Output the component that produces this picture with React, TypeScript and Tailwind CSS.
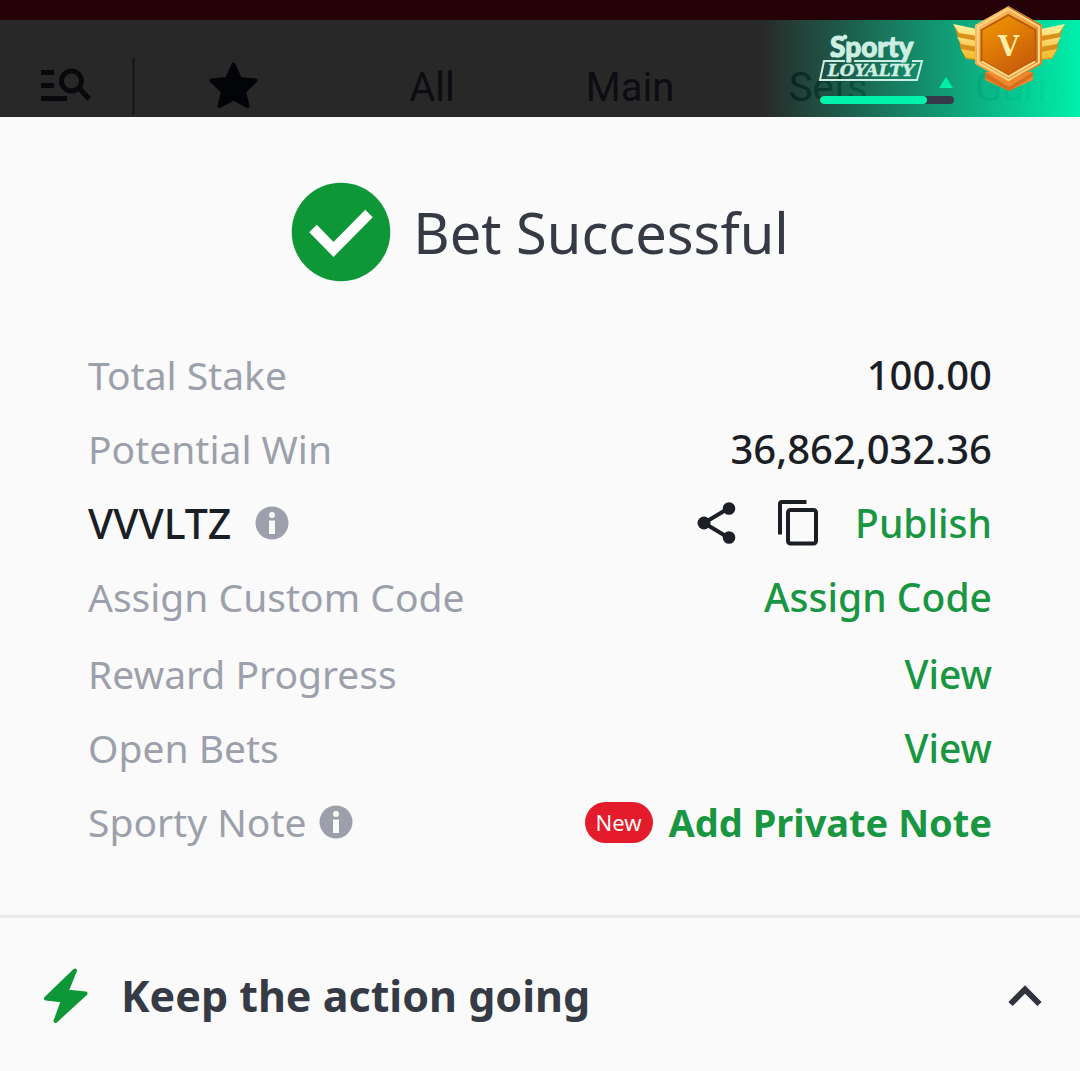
import type { ReactNode } from 'react';

const tabs = ['All', 'Main', 'Sets'];

function ListSearchIcon() {
  return (
    <svg width="52" height="36" viewBox="0 0 52 36" aria-hidden="true">
      <path d="M1 2h13v5H1zM1 15h13v5H1zM1 28h26v5H1z" fill="#07090c" />
      <circle cx="31.500" cy="13" r="10" fill="none" stroke="#07090c" strokeWidth="5" />
      <path d="M39 20 49 31" stroke="#07090c" strokeWidth="5" />
    </svg>
  );
}

function StarIcon() {
  return (
    <svg width="50" height="48" viewBox="0 0 50 48" aria-hidden="true">
      <path
        d="M24.500 2.500 31 17 46.500 18.500 35 29.500 38.500 44 24.500 36.500 10.500 44 14 29.500 2.500 18.500 18 17Z"
        fill="#020407"
        stroke="#020407"
        strokeWidth="4"
        strokeLinejoin="round"
      />
    </svg>
  );
}

function InfoIcon() {
  return (
    <svg width="34" height="34" viewBox="0 0 34 34" aria-hidden="true">
      <circle cx="17" cy="17" r="16.500" fill="#9ca0ab" />
      <circle cx="17" cy="9" r="3" fill="#fafafa" />
      <path d="M14 14.500h6V28h-6z" fill="#fafafa" />
    </svg>
  );
}

function ShareIcon() {
  return (
    <svg width="40" height="44" viewBox="0 0 40 44" aria-hidden="true">
      <path d="M32 7 7 22 32 37" fill="none" stroke="#1b1e25" strokeWidth="4" />
      <circle cx="32" cy="7.500" r="6.300" fill="#1b1e25" />
      <circle cx="7" cy="22" r="6.500" fill="#1b1e25" />
      <circle cx="32" cy="36.500" r="6.300" fill="#1b1e25" />
    </svg>
  );
}

function CopyIcon() {
  return (
    <svg width="42" height="48" viewBox="0 0 42 48" aria-hidden="true">
      <path d="M3 35.500V5a2 2 0 0 1 2-2h24.500" fill="none" stroke="#1b1e25" strokeWidth="4" />
      <rect x="11" y="11" width="28" height="33.500" rx="2.500" fill="none" stroke="#1b1e25" strokeWidth="4" />
    </svg>
  );
}

function SuccessIcon() {
  return (
    <svg width="100" height="100" viewBox="0 0 100 100" className="shrink-0" aria-hidden="true">
      <circle cx="50" cy="50" r="49.300" fill="#0d9737" />
      <path d="M22 46.500 42.500 67.500 78 31.500" fill="none" stroke="#fff" strokeWidth="10.500" />
    </svg>
  );
}

function BoltIcon() {
  return (
    <svg width="46" height="58" viewBox="0 0 46 58" aria-hidden="true">
      <path
        d="M32 3.500 23.500 24.500 42.500 26.500 12.500 54 20 33.500 3 31.500Z"
        fill="#0d9737"
        stroke="#0d9737"
        strokeWidth="4"
        strokeLinejoin="round"
      />
    </svg>
  );
}

function MedalIcon() {
  return (
    <svg width="112" height="88" viewBox="0 0 112 88" role="img" aria-label="Loyalty level V">
      <defs>
        <linearGradient id="wing" x1="0" y1="0" x2="0" y2="1">
          <stop offset="0" stopColor="#fff3a0" />
          <stop offset="1" stopColor="#f5b92c" />
        </linearGradient>
        <linearGradient id="rim" x1="0" y1="0" x2="1" y2="1">
          <stop offset="0" stopColor="#ffc870" />
          <stop offset="0.5" stopColor="#f5a03c" />
          <stop offset="1" stopColor="#d97410" />
        </linearGradient>
        <linearGradient id="face" x1="0" y1="0" x2="0.600" y2="1">
          <stop offset="0" stopColor="#f39a00" />
          <stop offset="1" stopColor="#c95c0c" />
        </linearGradient>
      </defs>
      <path d="M1 19 24 24V54L13 53 8 44 6 34Z" fill="#d99018" />
      <path d="M111 19 88 24V54L99 53 104 44 106 34Z" fill="#d99018" />
      <path d="M0 18 24 23V30L6 27ZM4 31 24 35V41L8 38ZM8 43 24 46V53L13 52Z" fill="url(#wing)" />
      <path d="M112 18 88 23V30L106 27ZM108 31 88 35V41L104 38ZM104 43 88 46V53L99 52Z" fill="url(#wing)" />
      <path d="M32 66 80 66V74L56 85 32 74Z" fill="#f0872e" />
      <path d="M32 66 56 81 80 66 80 70 56 85 32 72Z" fill="#b9560d" opacity="0.5" />
      <path d="M55.500 0 89 19V58L55.500 77 22 58V19Z" fill="url(#rim)" />
      <path d="M55.500 1 88 19.500" stroke="#b9691a" strokeWidth="1" />
      <path d="M55.500 3 86 20.500V56.500L55.500 74 25 56.500V20.500Z" fill="none" stroke="#ffd58c" strokeWidth="2" />
      <path d="M55.500 9 82.500 24V54L55.500 69.500 28.500 54V24Z" fill="url(#face)" stroke="#b85c0c" strokeWidth="2" />
      <path d="M29 55.500 55.500 70.500 82 55.500" fill="none" stroke="#ffe08a" strokeWidth="2" />
      <text x="55.500" y="49.500" textAnchor="middle" fontFamily="DejaVu Serif, serif" fontWeight="700" fontSize="27" fill="#ffefa6">
        V
      </text>
    </svg>
  );
}

function LoyaltyLogo() {
  return (
    <svg width="110" height="52" viewBox="0 0 110 52" role="img" aria-label="Sporty Loyalty">
      <g fill="#cdeee2" stroke="#cdeee2">
        <text x="11" y="25" fontFamily="Lato, sans-serif" fontWeight="900" fontSize="28" strokeWidth="1">
          Sporty
        </text>
        <circle cx="26" cy="5" r="2" />
        <circle cx="14" cy="23" r="2" />
        <text x="52" y="44" textAnchor="middle" fontFamily="DejaVu Serif, serif" fontWeight="700" fontStyle="italic" fontSize="17" strokeWidth="0.500">
          LOYALTY
        </text>
      </g>
      <path d="M35 29H84M93 29H103L98 48H1L5 29H26" fill="none" stroke="#cdeee2" strokeWidth="2" />
    </svg>
  );
}

function LoyaltyBanner() {
  return (
    <aside className="absolute right-0 top-0 h-full w-[320px] bg-linear-to-r from-[#00f0ac]/0 to-[#00f0ac]">
      <div className="absolute left-[59px] top-[12px]">
        <LoyaltyLogo />
      </div>
      <svg width="14" height="11" viewBox="0 0 14 11" className="absolute left-[179px] top-[57px]" aria-hidden="true">
        <path d="M7 0 14 11H0Z" fill="#00eea6" />
      </svg>
      <div
        role="progressbar"
        aria-label="Loyalty progress"
        aria-valuenow={80}
        aria-valuemin={0}
        aria-valuemax={100}
        className="absolute left-[60px] top-[76px] h-2 w-[134px] overflow-hidden rounded-full bg-[#353a4a]"
      >
        <div className="h-full w-4/5 rounded-full bg-[#00f3ab]" />
      </div>
      <div className="absolute -top-[14px] right-[15px]">
        <MedalIcon />
      </div>
    </aside>
  );
}

function Row({ label, children, strong = false, info = false }: { label: string; children: ReactNode; strong?: boolean; info?: boolean }) {
  return (
    <div className="flex h-[74px] items-center justify-between">
      <dt className={strong ? 'flex items-center gap-6 text-[41px] font-medium text-[#1b1e25]' : 'flex items-center gap-3 text-[#9ca0ab]'}>
        {label}
        {info && (
          <button type="button" aria-label={`About ${label}`}>
            <InfoIcon />
          </button>
        )}
      </dt>
      <dd className="flex items-center font-medium text-[#1b1e25]">{children}</dd>
    </div>
  );
}

function Action({ children }: { children: ReactNode }) {
  return (
    <button type="button" className="font-medium text-[#189641]">
      {children}
    </button>
  );
}

export default function App() {
  return (
    <div className="min-h-screen overflow-hidden bg-[#fafafa] font-['Noto_Sans',sans-serif]">
      <header>
        <div className="h-5 bg-[#240207]" />
        <div className="relative h-[97px] bg-[#282828]">
          <nav className="flex h-full items-center overflow-hidden pt-[34px] font-['Roboto',sans-serif] text-[40px] text-[#0b0d10]">
            <button type="button" aria-label="Search leagues" className="flex w-[132px] shrink-0 justify-center">
              <ListSearchIcon />
            </button>
            <div className="h-[56px] w-[3px] shrink-0 bg-[#1a1a1a]" />
            <button type="button" aria-label="Favourites" className="flex w-[198px] shrink-0 justify-center">
              <StarIcon />
            </button>
            {tabs.map((tab) => (
              <button type="button" key={tab} className="w-[198px] shrink-0 pt-1 text-center">
                {tab}
              </button>
            ))}
            <button type="button" className="shrink-0 px-12 pt-1">
              Game
            </button>
          </nav>
          <LoyaltyBanner />
        </div>
      </header>

      <main>
        <h1 className="flex items-center justify-center gap-[22px] pt-[65px] text-[56px] leading-[100px] text-[#353a45]">
          <SuccessIcon />
          Bet Successful
        </h1>

        <dl className="flex flex-col gap-[3px] px-[88px] pb-14 pt-14 text-[39px] leading-[56px]">
          <div>
            <Row label="Total Stake">
              <span className="text-[40px]">100.00</span>
            </Row>
            <Row label="Potential Win">
              <span className="text-[40px]">36,862,032.36</span>
            </Row>
            <Row label="VVVLTZ" strong info>
              <button type="button" aria-label="Share" className="mr-10">
                <ShareIcon />
              </button>
              <button type="button" aria-label="Copy" className="mr-9">
                <CopyIcon />
              </button>
              <Action>Publish</Action>
            </Row>
            <Row label="Assign Custom Code">
              <Action>Assign Code</Action>
            </Row>
          </div>
          <div>
            <Row label="Reward Progress">
              <Action>View</Action>
            </Row>
            <Row label="Open Bets">
              <Action>View</Action>
            </Row>
            <Row label="Sporty Note" info>
              <span className="mr-4 rounded-full bg-[#e31b2a] px-[11px] text-[22px] font-normal leading-[41px] text-[#fafafa]">New</span>
              <button type="button" className="text-[38px] font-bold text-[#189641]">
                Add Private Note
              </button>
            </Row>
          </div>
        </dl>

        <section className="border-t-3 border-[#e9eaec]">
          <h2>
            <button type="button" aria-expanded="true" className="flex w-full items-center px-[38px] pl-[43px] pt-11 text-[43px] font-bold leading-[68px] text-[#353a45]">
              <BoltIcon />
              <span className="ml-8">Keep the action going</span>
              <svg width="34" height="22" viewBox="0 0 34 22" className="ml-auto" aria-hidden="true">
                <path d="M2.500 19 17 4.500 31.500 19" fill="none" stroke="#2f333b" strokeWidth="6" />
              </svg>
            </button>
          </h2>
        </section>
      </main>
    </div>
  );
}
